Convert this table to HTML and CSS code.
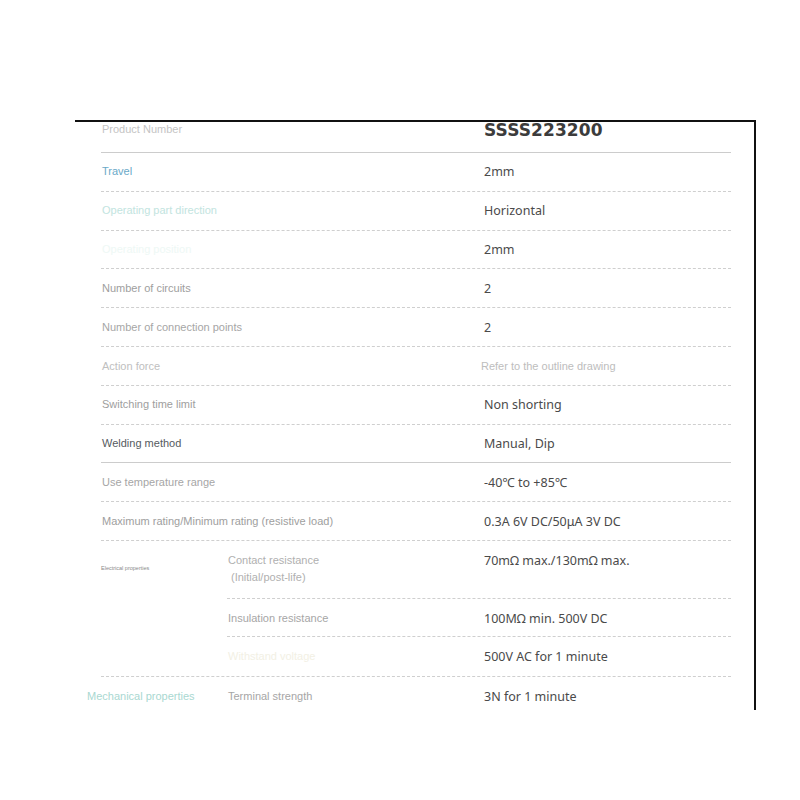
FILE: index.html
```html
<!DOCTYPE html>
<html>
<head>
<meta charset="utf-8">
<link rel="stylesheet" href="styles.css">
</head>
<body>
<div class="frame">
  <div class="row first">
    <div class="label span2 c-pn">Product Number</div>
    <div class="value pn">SSSS223200</div>
  </div>
  <div class="row"><div class="label span2 c-travel">Travel</div><div class="value">2mm</div></div>
  <div class="row"><div class="label span2 c-dir">Operating part direction</div><div class="value">Horizontal</div></div>
  <div class="row"><div class="label span2 c-faint">Operating position</div><div class="value">2mm</div></div>
  <div class="row"><div class="label span2 c-g1">Number of circuits</div><div class="value">2</div></div>
  <div class="row"><div class="label span2 c-g2">Number of connection points</div><div class="value">2</div></div>
  <div class="row"><div class="label span2 c-g3">Action force</div><div class="value note">Refer to the outline drawing</div></div>
  <div class="row"><div class="label span2 c-g1">Switching time limit</div><div class="value">Non shorting</div></div>
  <div class="row solid"><div class="label span2 c-dark">Welding method</div><div class="value">Manual, Dip</div></div>
  <div class="row"><div class="label span2 c-g2">Use temperature range</div><div class="value">-40℃ to +85℃</div></div>
  <div class="row"><div class="label span2 c-g1">Maximum rating/Minimum rating (resistive load)</div><div class="value">0.3A 6V DC/50μA 3V DC</div></div>
  <div class="group">
    <div class="group-label">Electrical properties</div>
    <div class="subrows">
      <div class="subrow tall">
        <div class="label c-g4">Contact resistance<br><span class="indent">(Initial/post-life)</span></div>
        <div class="value">70mΩ max./130mΩ max.</div>
      </div>
      <div class="subrow mid">
        <div class="label c-g2">Insulation resistance</div>
        <div class="value">100MΩ min. 500V DC</div>
      </div>
      <div class="subrow last">
        <div class="label c-beige">Withstand voltage</div>
        <div class="value">500V AC for 1 minute</div>
      </div>
    </div>
  </div>
  <div class="row mech">
    <div class="label mech-label">Mechanical properties</div>
    <div class="label c-g2">Terminal strength</div>
    <div class="value">3N for 1 minute</div>
  </div>
</div>
</body>
</html>
```

FILE: styles.css
```css
html, body {
  margin: 0;
  padding: 0;
  background: #ffffff;
}

.frame {
  margin-top: 120px;
  margin-left: 75px;
  width: 630px;
  height: 588px;
  padding: 0 23px 0 26px;
  border-top: 2px solid #111111;
  border-right: 2px solid #111111;
}

.row {
  display: grid;
  grid-template-columns: 126px 256px 1fr;
  align-items: center;
  height: 37.8px;
  border-bottom: 1px dashed #cfcfcf;
}

.row.first {
  height: 30px;
  align-items: start;
  border-bottom: 1px solid #cccccc;
}

.row.solid {
  border-bottom: 1px solid #cccccc;
}

.row.mech {
  border-bottom: none;
  height: 36px;
  padding-top: 2px;
}

.label {
  font-family: "Liberation Sans", Arial, sans-serif;
  font-size: 11px;
  line-height: 17px;
  padding-left: 1px;
  white-space: nowrap;
}

.span2 {
  grid-column: 1 / 3;
}

.value {
  grid-column: 3;
  font-family: "Noto Sans", "Noto Sans CJK JP", sans-serif;
  font-size: 12.5px;
  line-height: 17px;
  color: #4a4a4a;
  padding-left: 1px;
  white-space: nowrap;
}

.value.pn {
  font-family: "DejaVu Sans", Verdana, sans-serif;
  font-weight: bold;
  font-size: 17px;
  line-height: 17px;
  color: #3c3c3c;
  padding-top: 0;
  letter-spacing: 0.1px;
}

.first .label {
  padding-top: 0;
  margin-top: -1px;
}

.value.note {
  font-family: "Liberation Sans", Arial, sans-serif;
  font-size: 11px;
  color: #bdbdbd;
  margin-left: -3px;
  padding-top: 2px;
}

.group {
  display: grid;
  grid-template-columns: 126px 1fr;
  border-bottom: 1px dashed #cfcfcf;
}

.group-label {
  font-family: "Liberation Sans", Arial, sans-serif;
  font-size: 5.5px;
  color: #8a8a8a;
  padding-top: 24px;
  padding-left: 0;
  white-space: nowrap;
}

.subrows {
  display: flex;
  flex-direction: column;
}

.subrow {
  display: grid;
  grid-template-columns: 256px 1fr;
  align-items: center;
  height: 37px;
  border-bottom: 1px dashed #cfcfcf;
}

.subrow .value {
  grid-column: 2;
}

.subrow.tall {
  height: 57px;
  align-items: start;
}

.subrow.tall .label,
.subrow.tall .value {
  padding-top: 11px;
}

.subrow.mid .label {
  padding-top: 3px;
}

.subrow.mid .value {
  padding-top: 2px;
}

.subrow.last {
  height: 39px;
  border-bottom: none;
}

.indent {
  padding-left: 3px;
}

.mech-label {
  margin-left: -15px;
  color: #a9d8d1;
}

.mech .label:nth-child(2) {
  grid-column: 2;
}

.c-pn { color: #c4c4c4; }
.c-travel { color: #6aa9c8; }
.c-dir { color: #c2e4e0; }
.c-faint { color: #eef8f5; }
.c-g1 { color: #9e9e9e; }
.c-g2 { color: #a6a6a6; }
.c-g3 { color: #c0c0c0; padding-top: 2px; }
.c-g4 { color: #b0b0b0; }
.c-dark { color: #555a60; }
.c-beige { color: #f2f0e4; }
```
